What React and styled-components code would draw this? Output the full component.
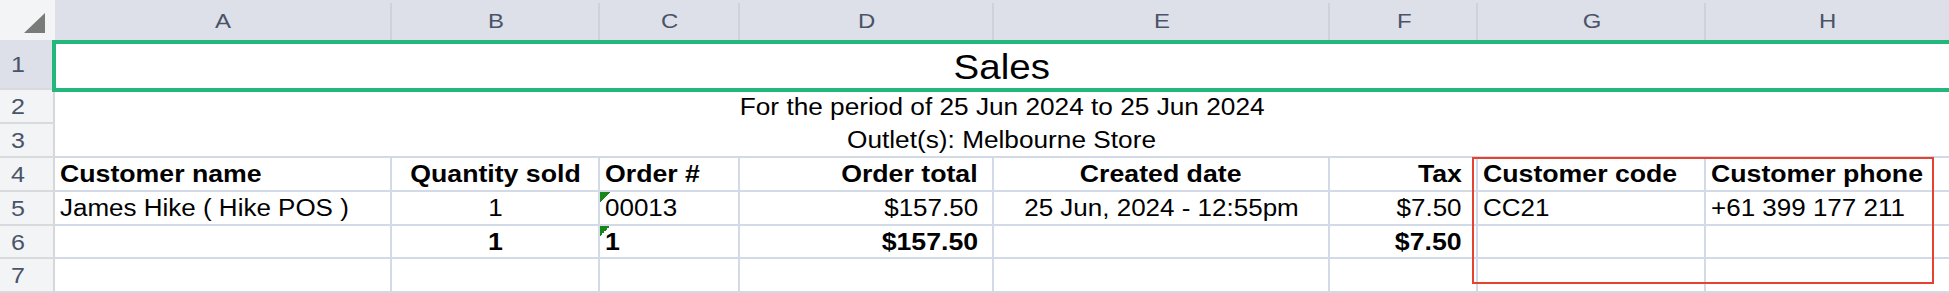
import React from 'react';
import styled, { createGlobalStyle, css } from 'styled-components';

const GlobalStyle = createGlobalStyle`
  *, *::before, *::after { box-sizing: border-box; }
  html, body { margin: 0; padding: 0; background: #fff; }
  body {
    font-family: "Liberation Sans", Arial, Helvetica, sans-serif;
    overflow: hidden;
  }
`;

const GRID = '#d3dae7';
const HEAD_BG = '#dde0e8';
const ROWHEAD_BG = '#f3f4f6';
const ROWHEAD_LINE = '#d9dadd';
const LABEL = '#4a5468';

const Sheet = styled.div`
  position: relative;
  display: grid;
  grid-template-columns: 55px 337px 208px 140px 254px 336px 148px 228px 1fr;
  grid-template-rows: 40px 50px 34px 34px 34px 34px 33px 34px;
  width: 1949px;
  height: 293px;
  overflow: hidden;
  background: #fff;
  color: #000;
`;

const Corner = styled.div`
  background: ${ROWHEAD_BG};
  display: flex;
  justify-content: flex-end;
  align-items: flex-end;
  padding: 0 10px 7px 0;
`;

const CornerMark = styled.span`
  width: 21px;
  height: 20px;
  background: #7a7a7a;
  clip-path: polygon(100% 0, 100% 100%, 0 100%);
`;

const ColHead = styled.div`
  display: flex;
  align-items: center;
  justify-content: center;
  padding-top: 2px;
  font-size: 21px;
  color: ${LABEL};
  background: ${(p) =>
    p.$last
      ? HEAD_BG
      : `linear-gradient(#cfd2d9, #cfd2d9) right 3px / 2px calc(100% - 3px) no-repeat, ${HEAD_BG}`};
`;

const RowHead = styled.div`
  display: flex;
  align-items: center;
  padding: 2px 0 0 11px;
  font-size: 22px;
  color: ${LABEL};
  background: ${(p) => (p.$active ? HEAD_BG : ROWHEAD_BG)};
  border-right: 2px solid #d6d7da;
  border-bottom: 2px solid ${ROWHEAD_LINE};
`;

const Banner = styled.div`
  grid-column: 2 / -1;
  display: flex;
  align-items: center;
  justify-content: center;
  padding-top: ${(p) => p.$pt || 1}px;
  font-size: ${(p) => p.$size}px;
  white-space: nowrap;
  border-bottom: ${(p) => (p.$line ? `2px solid ${GRID}` : 'none')};
`;

const JUSTIFY = { left: 'flex-start', center: 'center', right: 'flex-end' };

const Cell = styled.div`
  display: flex;
  align-items: center;
  justify-content: ${(p) => JUSTIFY[p.$align]};
  padding: 1px ${(p) => (p.$align === 'right' ? 14 : 5)}px 0 5px;
  font-size: 23px;
  font-weight: ${(p) => (p.$bold ? 700 : 400)};
  white-space: nowrap;
  border-right: ${(p) => (p.$last ? 'none' : `2px solid ${GRID}`)};
  border-bottom: 2px solid ${GRID};
  ${(p) =>
    p.$flag &&
    css`
      background: linear-gradient(135deg, #17851a 50%, transparent 50%) 0 0 / 10px 10px no-repeat;
    `}
`;

const Txt = styled.span`
  display: inline-block;
  transform: scaleX(${(p) => p.$sx || 1.14});
  transform-origin: ${(p) => p.$origin || 'left'} center;
`;

const Selection = styled.div`
  position: absolute;
  left: 52px;
  top: 40px;
  width: 1902px;
  height: 52px;
  border: 4px solid #23b77b;
  pointer-events: none;
`;

const Highlight = styled.div`
  position: absolute;
  left: 1472px;
  top: 157px;
  width: 462px;
  height: 127px;
  border: 2px solid #e4432f;
  pointer-events: none;
`;

const COLS = ['A', 'B', 'C', 'D', 'E', 'F', 'G', 'H'];
const ALIGN = ['left', 'center', 'left', 'right', 'center', 'right', 'left', 'left'];

const TABLE = [
  {
    bold: true,
    cells: ['Customer name', 'Quantity sold', 'Order #', 'Order total', 'Created date', 'Tax', 'Customer code', 'Customer phone'],
  },
  {
    bold: false,
    flag: 2,
    cells: ['James Hike ( Hike POS )', '1', '00013', '$157.50', '25 Jun, 2024 - 12:55pm', '$7.50', 'CC21', '+61 399 177 211'],
  },
  {
    bold: true,
    flag: 2,
    cells: ['', '1', '1', '$157.50', '', '$7.50', '', ''],
  },
  {
    bold: false,
    cells: ['', '', '', '', '', '', '', ''],
  },
];

export default function App() {
  return (
    <>
      <GlobalStyle />
      <Sheet>
        <Corner>
          <CornerMark />
        </Corner>
        {COLS.map((c, i) => (
          <ColHead key={c} $last={i === COLS.length - 1}>
            <Txt $origin="center">{c}</Txt>
          </ColHead>
        ))}

        <RowHead $active>
          <Txt>1</Txt>
        </RowHead>
        <Banner $size={35} $pt={4}>
          <Txt $origin="center" $sx={1.1}>Sales</Txt>
        </Banner>

        <RowHead>
          <Txt>2</Txt>
        </RowHead>
        <Banner $size={23}>
          <Txt $origin="center">For the period of 25 Jun 2024 to 25 Jun 2024</Txt>
        </Banner>

        <RowHead>
          <Txt>3</Txt>
        </RowHead>
        <Banner $size={23} $line>
          <Txt $origin="center">Outlet(s): Melbourne Store</Txt>
        </Banner>

        {TABLE.map((row, r) => (
          <React.Fragment key={r}>
            <RowHead>
              <Txt>{r + 4}</Txt>
            </RowHead>
            {row.cells.map((text, c) => (
              <Cell
                key={c}
                $align={ALIGN[c]}
                $bold={row.bold}
                $flag={row.flag === c}
                $last={c === COLS.length - 1}
              >
                {text && (
                  <Txt $origin={ALIGN[c]} $sx={row.bold ? 1.16 : 1.13}>
                    {text}
                  </Txt>
                )}
              </Cell>
            ))}
          </React.Fragment>
        ))}

        <Selection />
        <Highlight />
      </Sheet>
    </>
  );
}
